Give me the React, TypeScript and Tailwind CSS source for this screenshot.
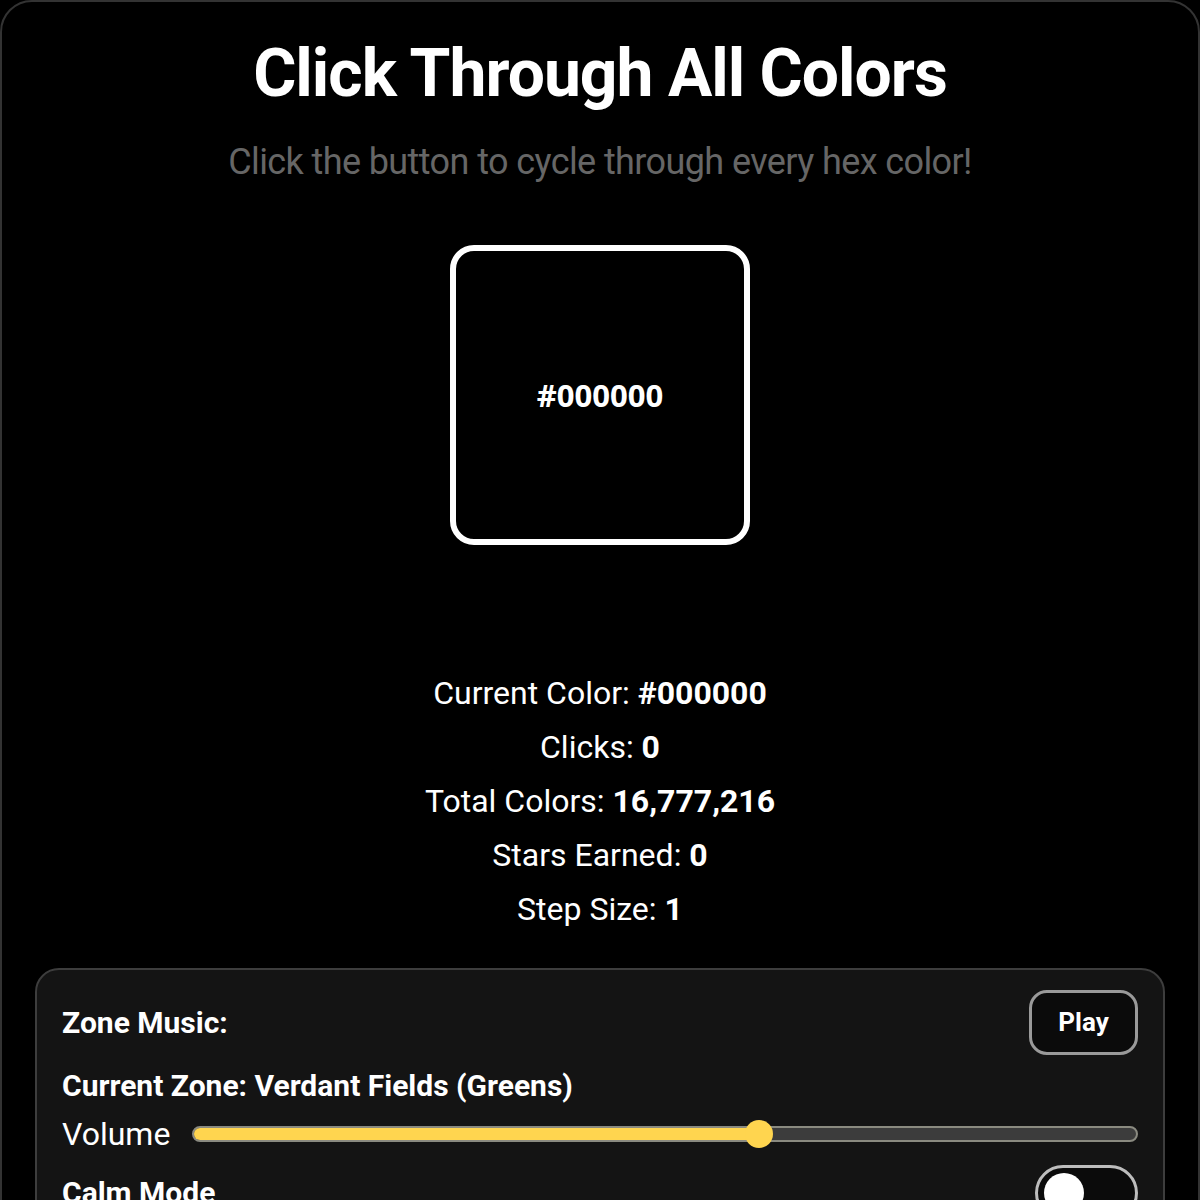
const stats: { label: string; value: string }[] = [
  { label: 'Current Color:', value: '#000000' },
  { label: 'Clicks:', value: '0' },
  { label: 'Total Colors:', value: '16,777,216' },
  { label: 'Stars Earned:', value: '0' },
  { label: 'Step Size:', value: '1' },
];

function ZonePanel() {
  const volume = 60;
  return (
    <div className="mx-[33px] mt-[40px] rounded-[24px] border-2 border-[#3d3d3d] bg-[#141414] px-[25px] pt-[20px] pb-8">
      <div className="flex items-center justify-between">
        <h3 className="text-[30px] font-bold leading-none">Zone Music:</h3>
        <button className="h-[65px] w-[109px] rounded-[18px] border-[3px] border-[#9a9a9a] bg-[#0b0b0b] text-[26px] font-bold text-white">
          Play
        </button>
      </div>
      <p className="mt-[16px] text-[30px] font-bold leading-none">Current Zone: Verdant Fields (Greens)</p>
      <div className="mt-[17px] flex items-center gap-[22px]">
        <span className="text-[32px] leading-none">Volume</span>
        <div className="relative h-[16px] flex-1 rounded-full border-2 border-[#8a8a80] bg-[#3c3c3c]">
          <div className="h-full rounded-full bg-[#ffd54f]" style={{ width: `${volume}%` }} />
          <div
            className="absolute top-1/2 h-[28px] w-[28px] -translate-x-1/2 -translate-y-1/2 rounded-full bg-[#ffd54f]"
            style={{ left: `${volume}%` }}
          />
        </div>
      </div>
      <div className="mt-[15px] flex items-start justify-between">
        <span className="mt-[13px] text-[30px] font-bold leading-none">Calm Mode</span>
        <div className="flex h-[56px] w-[103px] items-center rounded-full border-[3px] border-[#bdbdbd] bg-[#0b0b0b] px-[6px]">
          <div className="h-[40px] w-[40px] rounded-full bg-white" />
        </div>
      </div>
    </div>
  );
}

export default function App() {
  return (
    <div className="min-h-[1200px] bg-black font-['Roboto',sans-serif] text-white">
      <div className="min-h-[1240px] rounded-[32px] border-2 border-[#333] bg-black pt-[34px]">
        <h1 className="text-center text-[66px] font-bold leading-[76px] tracking-[-1px]">Click Through All Colors</h1>
        <p className="mt-[28px] text-center text-[36px] leading-[44px] tracking-[-0.6px] text-[#666]">
          Click the button to cycle through every hex color!
        </p>
        <div className="mt-[61px] flex justify-center">
          <div className="flex h-[300px] w-[300px] items-center justify-center rounded-[24px] border-[6px] border-white bg-black">
            <span className="font-['Open_Sans',sans-serif] text-[31px] font-bold">#000000</span>
          </div>
        </div>
        <div className="mt-[129px] flex flex-col items-center gap-[16px]">
          {stats.map((s) => (
            <p key={s.label} className="text-[32px] leading-[38px]">
              {s.label} <span className="font-bold">{s.value}</span>
            </p>
          ))}
        </div>
        <ZonePanel />
      </div>
    </div>
  );
}
